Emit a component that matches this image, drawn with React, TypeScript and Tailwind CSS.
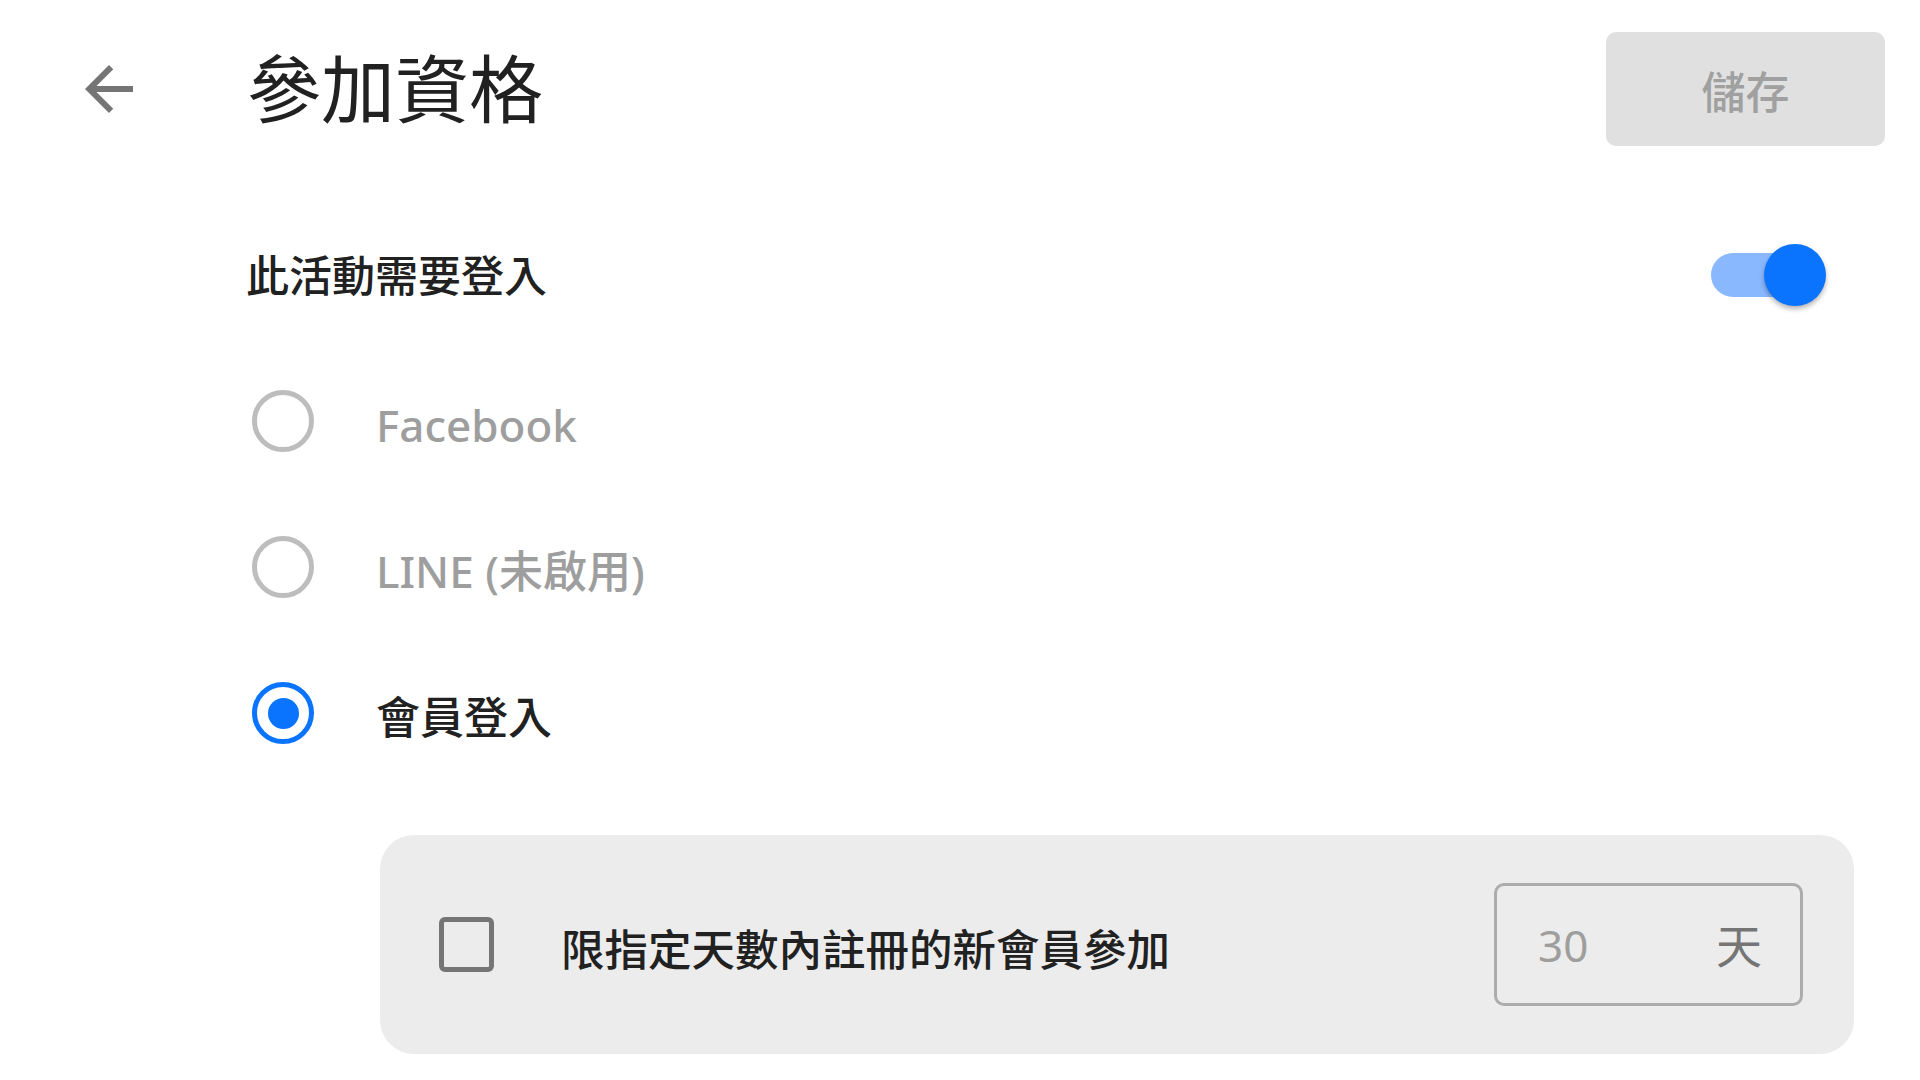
import React from "react";

function Radio({ checked }: { checked?: boolean }) {
  return (
    <div
      className={
        "w-[62px] h-[62px] rounded-full border-[5px] flex items-center justify-center shrink-0 " +
        (checked ? "border-[#0a74ff]" : "border-[#bdbdbd]")
      }
    >
      {checked && <div className="w-[31px] h-[31px] rounded-full bg-[#0a74ff]" />}
    </div>
  );
}

function Toggle() {
  return (
    <div className="relative w-[115px] h-[62px] flex items-center">
      <div className="w-[105px] h-[44px] rounded-full bg-[#8ab8ff]" />
      <div className="absolute right-0 top-0 w-[62px] h-[62px] rounded-full bg-[#0a74ff] shadow-[0_3px_5px_rgba(0,0,0,0.3)]" />
    </div>
  );
}

export default function App() {
  const options = [
    { label: "Facebook", checked: false, muted: true },
    { label: "LINE (未啟用)", checked: false, muted: true },
    { label: "會員登入", checked: true, muted: false },
  ];
  return (
    <div className="w-[1920px] h-[1080px] bg-white overflow-hidden font-['Noto_Sans','Noto_Sans_CJK_TC',sans-serif] text-[#212121]">
      <header className="flex items-center pt-[32px] h-[146px]">
        <div className="w-[247px] flex shrink-0">
          <svg className="ml-[73px]" width="72" height="72" viewBox="0 0 24 24">
            <path
              fill="#757575"
              d="M20 11H7.83l5.59-5.59L12 4l-8 8 8 8 1.41-1.41L7.83 13H20v-2z"
            />
          </svg>
        </div>
        <h1 className="text-[74px] leading-none font-normal">參加資格</h1>
        <button className="ml-auto mr-[35px] w-[279px] h-[114px] rounded-[10px] bg-[#e0e0e0] text-[#a0a0a0] text-[44px] font-medium leading-none pt-[5px]">
          儲存
        </button>
      </header>

      <div className="mt-[98px] h-[62px] flex items-center justify-between pl-[246px] pr-[94px]">
        <span className="text-[43px] font-medium leading-none">此活動需要登入</span>
        <Toggle />
      </div>

      <div className="mt-[84px] flex flex-col gap-[84px] pl-[252px]">
        {options.map((o) => (
          <div key={o.label} className="h-[62px] flex items-center gap-[62px]">
            <Radio checked={o.checked} />
            <span
              className={
                "text-[44px] font-medium leading-none pt-[8px] " +
                (o.muted ? "text-[#9e9e9e]" : "text-[#212121]")
              }
            >
              {o.label}
            </span>
          </div>
        ))}
      </div>

      <div className="mt-[91px] ml-[380px] mr-[66px] h-[219px] rounded-[34px] bg-[#ececec] flex items-center pl-[59px] pr-[51px]">
        <div className="w-[55px] h-[55px] border-[5px] border-[#757575] rounded-[6px] shrink-0" />
        <span className="ml-[67px] text-[43.5px] font-medium leading-none pt-[11px]">
          限指定天數內註冊的新會員參加
        </span>
        <div className="ml-auto w-[309px] h-[123px] border-[3px] border-[#acacac] rounded-[10px] flex items-center justify-between pl-[41px] pr-[38px]">
          <span className="text-[44px] text-[#9e9e9e] leading-none">30</span>
          <span className="text-[46px] text-[#757575] leading-none">天</span>
        </div>
      </div>
    </div>
  );
}
